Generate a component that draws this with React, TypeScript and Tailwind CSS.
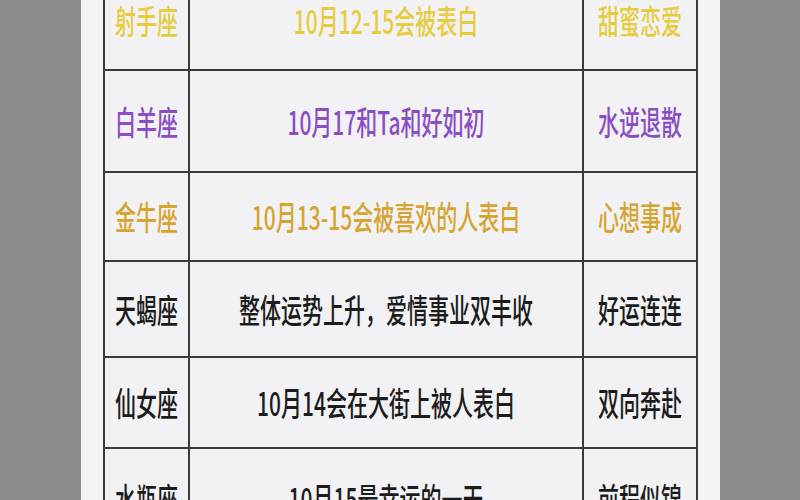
import React from "react";

type Row = { a: string; b: string; c: string; color: string; h: string };

const rows: Row[] = [
  { a: "射手座", b: "10月12-15会被表白", c: "甜蜜恋爱", color: "text-[#e6cc3e]", h: "h-[100px]" },
  { a: "白羊座", b: "10月17和Ta和好如初", c: "水逆退散", color: "text-[#8a4ec4]", h: "h-[102px]" },
  { a: "金牛座", b: "10月13-15会被喜欢的人表白", c: "心想事成", color: "text-[#d6a431]", h: "h-[89px]" },
  { a: "天蝎座", b: "整体运势上升，爱情事业双丰收", c: "好运连连", color: "text-[#1c1c1c]", h: "h-[96px]" },
  { a: "仙女座", b: "10月14会在大街上被人表白", c: "双向奔赴", color: "text-[#1c1c1c]", h: "h-[91px]" },
  { a: "水瓶座", b: "10月15最幸运的一天", c: "前程似锦", color: "text-[#1c1c1c]", h: "h-[100px]" },
];

function Txt({ children, color }: { children: React.ReactNode; color: string }) {
  return (
    <span
      className={`inline-block scale-y-[1.55] text-[21px] leading-none font-medium whitespace-nowrap ${color}`}
      style={{ fontFamily: '"Noto Sans CJK SC", "Noto Sans", sans-serif' }}
    >
      {children}
    </span>
  );
}

export default function App() {
  return (
    <div className="w-[800px] h-[500px] bg-[#8b8b8b] overflow-hidden pl-[81px]">
      <div className="w-[639px] h-full bg-[#f4f4f6] pl-[22px] overflow-hidden">
        <div className="w-[595px] mt-[-29px] border-l-2 border-r-2 border-[#3a3a3a] bg-[#f2f2f4]">
          {rows.map((r, i) => (
            <div
              key={i}
              className={`grid grid-cols-[85px_394px_112px] border-b-2 border-[#3a3a3a] ${r.h}`}
            >
              <div className="flex items-center justify-center border-r-2 border-[#3a3a3a]">
                <Txt color={r.color}>{r.a}</Txt>
              </div>
              <div className="flex items-center justify-center border-r-2 border-[#3a3a3a]">
                <Txt color={r.color}>{r.b}</Txt>
              </div>
              <div className="flex items-center justify-center">
                <Txt color={r.color}>{r.c}</Txt>
              </div>
            </div>
          ))}
        </div>
      </div>
    </div>
  );
}
